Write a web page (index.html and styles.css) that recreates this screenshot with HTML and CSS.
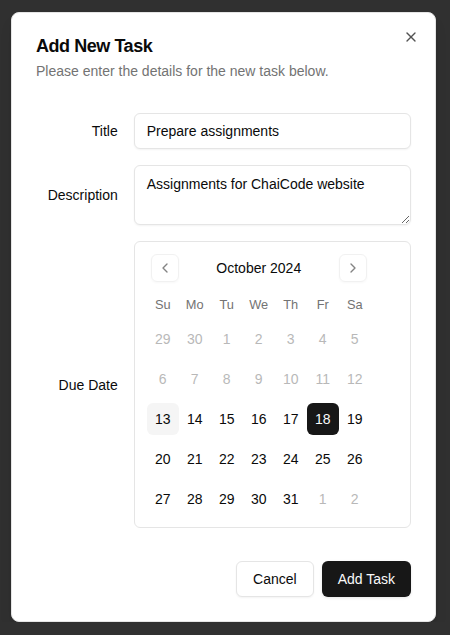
FILE: index.html
```html
<!DOCTYPE html>
<html lang="en">
<head>
<meta charset="utf-8">
<title>Add New Task</title>
<link rel="stylesheet" href="styles.css">
</head>
<body>
<div class="page">
  <div class="dialog">
    <button class="close" aria-label="Close">
      <svg width="16" height="16" viewBox="0 0 24 24" fill="none" stroke="currentColor" stroke-width="2" stroke-linecap="round" stroke-linejoin="round"><path d="M18 6 6 18"/><path d="m6 6 12 12"/></svg>
    </button>
    <div class="header">
      <h2 class="title">Add New Task</h2>
      <p class="desc">Please enter the details for the new task below.</p>
    </div>
    <div class="form">
      <div class="row">
        <label class="label">Title</label>
        <input class="input field" value="Prepare assignments">
      </div>
      <div class="row">
        <label class="label">Description</label>
        <textarea class="textarea field">Assignments for ChaiCode website</textarea>
      </div>
      <div class="row">
        <label class="label">Due Date</label>
        <div class="calendar field">
          <div class="month">
            <div class="caption">
              <button class="nav nav-prev" aria-label="Previous month">
                <svg width="16" height="16" viewBox="0 0 24 24" fill="none" stroke="currentColor" stroke-width="2" stroke-linecap="round" stroke-linejoin="round"><path d="m15 18-6-6 6-6"/></svg>
              </button>
              <div class="caption-label">October 2024</div>
              <button class="nav nav-next" aria-label="Next month">
                <svg width="16" height="16" viewBox="0 0 24 24" fill="none" stroke="currentColor" stroke-width="2" stroke-linecap="round" stroke-linejoin="round"><path d="m9 18 6-6-6-6"/></svg>
              </button>
            </div>
            <div class="weekdays">
              <div class="wd">Su</div><div class="wd">Mo</div><div class="wd">Tu</div><div class="wd">We</div><div class="wd">Th</div><div class="wd">Fr</div><div class="wd">Sa</div>
            </div>
            <div class="week">
              <div class="day muted">29</div><div class="day muted">30</div><div class="day muted">1</div><div class="day muted">2</div><div class="day muted">3</div><div class="day muted">4</div><div class="day muted">5</div>
            </div>
            <div class="week">
              <div class="day muted">6</div><div class="day muted">7</div><div class="day muted">8</div><div class="day muted">9</div><div class="day muted">10</div><div class="day muted">11</div><div class="day muted">12</div>
            </div>
            <div class="week">
              <div class="day today">13</div><div class="day">14</div><div class="day">15</div><div class="day">16</div><div class="day">17</div><div class="day selected">18</div><div class="day">19</div>
            </div>
            <div class="week">
              <div class="day">20</div><div class="day">21</div><div class="day">22</div><div class="day">23</div><div class="day">24</div><div class="day">25</div><div class="day">26</div>
            </div>
            <div class="week">
              <div class="day">27</div><div class="day">28</div><div class="day">29</div><div class="day">30</div><div class="day">31</div><div class="day muted">1</div><div class="day muted">2</div>
            </div>
          </div>
        </div>
      </div>
    </div>
    <div class="footer">
      <button class="btn btn-outline">Cancel</button>
      <button class="btn btn-primary">Add Task</button>
    </div>
  </div>
</div>
</body>
</html>
```

FILE: styles.css
```css
html, body {
  margin: 0;
  background: #303030;
  font-family: "Liberation Sans", Arial, sans-serif;
  color: #0a0a0a;
}

.page {
  padding: 12px 0 0 11px;
}

.dialog {
  position: relative;
  box-sizing: border-box;
  width: 425px;
  background: #ffffff;
  border: 1px solid #e5e5e5;
  border-radius: 8px;
  padding: 24px;
  display: grid;
  gap: 16px;
  box-shadow: 0 10px 15px -3px rgba(0,0,0,0.1), 0 4px 6px -4px rgba(0,0,0,0.1);
}

.close {
  position: absolute;
  top: 16px;
  right: 16px;
  width: 16px;
  height: 16px;
  padding: 0;
  border: none;
  background: none;
  color: #0a0a0a;
  opacity: 0.7;
  display: flex;
}

.header {
  display: flex;
  flex-direction: column;
  gap: 6px;
}

.title {
  margin: 0;
  font-size: 18px;
  font-weight: 700;
  line-height: 1;
  letter-spacing: -0.025em;
  color: #0a0a0a;
}

.desc {
  margin: 0;
  font-size: 14px;
  line-height: 20px;
  color: #737373;
}

.form {
  display: grid;
  gap: 16px;
  padding: 16px 0 17px;
}

.row {
  display: grid;
  grid-template-columns: repeat(4, minmax(0, 1fr));
  align-items: center;
  gap: 16px;
}

.label {
  text-align: right;
  font-size: 14px;
  line-height: 1;
  font-weight: 500;
  color: #0a0a0a;
}

.field {
  grid-column: span 3;
}

.input,
.textarea {
  box-sizing: border-box;
  width: 100%;
  border: 1px solid #e5e5e5;
  border-radius: 6px;
  background: #ffffff;
  font-family: inherit;
  font-size: 14px;
  line-height: 20px;
  color: #0a0a0a;
  box-shadow: 0 1px 2px 0 rgba(0,0,0,0.05);
  outline: none;
  margin: 0;
}

.input {
  height: 36px;
  padding: 4px 12px;
}

.textarea {
  height: 60px;
  min-height: 60px;
  padding: 8px 12px;
  display: block;
}

.calendar {
  box-sizing: border-box;
  border: 1px solid #e5e5e5;
  border-radius: 6px;
  padding: 12px;
}

.month {
  width: 224px;
}

.caption {
  position: relative;
  display: flex;
  justify-content: center;
  align-items: center;
  padding-top: 4px;
}

.caption-label {
  font-size: 14px;
  line-height: 20px;
  font-weight: 500;
}

.nav {
  position: absolute;
  top: 0;
  box-sizing: border-box;
  width: 28px;
  height: 28px;
  padding: 0;
  border: 1px solid #e5e5e5;
  border-radius: 6px;
  background: transparent;
  color: #0a0a0a;
  opacity: 0.5;
  display: flex;
  align-items: center;
  justify-content: center;
  box-shadow: 0 1px 2px 0 rgba(0,0,0,0.05);
}

.nav-prev { left: 4px; }
.nav-next { right: 4px; }

.weekdays {
  display: flex;
  margin-top: 16px;
}

.wd {
  width: 32px;
  text-align: center;
  font-size: 12.8px;
  line-height: 21px;
  color: #737373;
}

.week {
  display: flex;
  margin-top: 8px;
}

.day {
  width: 32px;
  height: 32px;
  display: flex;
  align-items: center;
  justify-content: center;
  font-size: 14px;
  border-radius: 6px;
  color: #0a0a0a;
}

.day.muted {
  color: #737373;
  opacity: 0.5;
}

.day.today {
  background: #f5f5f5;
}

.day.selected {
  background: #171717;
  color: #fafafa;
}

.footer {
  display: flex;
  justify-content: flex-end;
  gap: 8px;
}

.btn {
  box-sizing: border-box;
  height: 36px;
  padding: 0 16px;
  border-radius: 6px;
  font-family: inherit;
  font-size: 14px;
  font-weight: 500;
  line-height: 20px;
  cursor: pointer;
}

.btn-outline {
  border: 1px solid #e5e5e5;
  background: #ffffff;
  color: #0a0a0a;
  box-shadow: 0 1px 2px 0 rgba(0,0,0,0.05);
}

.btn-primary {
  border: none;
  background: #171717;
  color: #fafafa;
  box-shadow: 0 1px 3px 0 rgba(0,0,0,0.1);
}
```
